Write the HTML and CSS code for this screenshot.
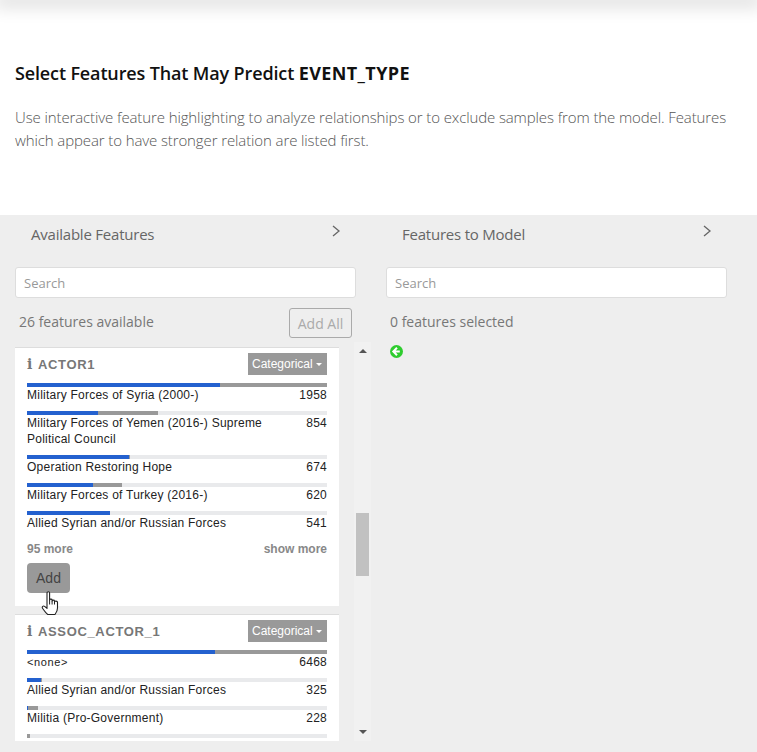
FILE: index.html
```html
<!DOCTYPE html>
<html lang="en">
<head>
    <meta charset="UTF-8">
    <meta name="viewport" content="width=device-width, initial-scale=1.0">
    <title>Select Features</title>
    <link rel="stylesheet" href="styles.css">
</head>
<body>

<div class="topbar"></div>

<div class="intro">
    <h2>Select Features That May Predict <b>EVENT_TYPE</b></h2>
    <p>Use interactive feature highlighting to analyze relationships or to exclude samples from the model. Features which appear to have stronger relation are listed first.</p>
</div>

<div class="panels">
    <div class="panel">
        <div class="panel-head">
            <span class="panel-title">Available Features</span>
            <svg class="chevron" width="9" height="12" viewBox="0 0 9 12"><path d="M1 1l6 5-6 5" fill="none" stroke="#666" stroke-width="1.3"/></svg>
        </div>
        <input class="search" type="text" placeholder="Search">
        <div class="count-row">
            <span class="count">26 features available</span>
            <button class="add-all">Add All</button>
        </div>
        <div class="list-wrap">
            <div class="cards">
                <div class="card">
                    <div class="card-head">
                        <span class="info">i</span>
                        <span class="feature-name">ACTOR1</span>
                        <span class="badge">Categorical<span class="caret"></span></span>
                    </div>
                    <div class="row">
                        <div class="bar"><span class="blue" style="width:193px"></span><span class="grey" style="width:107px"></span></div>
                        <div class="row-text"><span>Military Forces of Syria (2000-)</span><span class="num">1958</span></div>
                    </div>
                    <div class="row">
                        <div class="bar"><span class="blue" style="width:71px"></span><span class="grey" style="width:60px"></span></div>
                        <div class="row-text"><span>Military Forces of Yemen (2016-) Supreme Political Council</span><span class="num">854</span></div>
                    </div>
                    <div class="row">
                        <div class="bar"><span class="blue" style="width:102px"></span><span class="grey" style="width:1px"></span></div>
                        <div class="row-text"><span>Operation Restoring Hope</span><span class="num">674</span></div>
                    </div>
                    <div class="row">
                        <div class="bar"><span class="blue" style="width:66px"></span><span class="grey" style="width:29px"></span></div>
                        <div class="row-text"><span>Military Forces of Turkey (2016-)</span><span class="num">620</span></div>
                    </div>
                    <div class="row">
                        <div class="bar"><span class="blue" style="width:83px"></span></div>
                        <div class="row-text"><span>Allied Syrian and/or Russian Forces</span><span class="num">541</span></div>
                    </div>
                    <div class="more-row"><span>95 more</span><span>show more</span></div>
                    <div class="add-wrap">
                        <button class="add">Add</button>
                        <svg class="hand" width="19" height="25" viewBox="0 0 19 25"><path d="M6 2c0-1.600 2.600-1.600 2.600 0v7c0-1.200 2.500-1.200 2.500 0v1c0-1.200 2.400-1.200 2.400 0v1c0-1.200 3-1.200 3 .3v5.700c0 3-1.300 5-2.500 6.500H6.800c-1.700-1.300-3.500-3.800-5.300-6.300-.9-1.300 .8-2.900 2.100-1.800l2.400 2z" fill="#fff" stroke="#222" stroke-width="1.100" stroke-linejoin="round"/><path d="M8.600 9v4.500M11.100 10v3.500M13.500 11v2.500" stroke="#222" stroke-width="1" fill="none"/></svg>
                    </div>
                </div>
                <div class="card">
                    <div class="card-head">
                        <span class="info">i</span>
                        <span class="feature-name">ASSOC_ACTOR_1</span>
                        <span class="badge">Categorical<span class="caret"></span></span>
                    </div>
                    <div class="row">
                        <div class="bar"><span class="blue" style="width:188px"></span><span class="grey" style="width:112px"></span></div>
                        <div class="row-text"><span class="tag">&lt;none&gt;</span><span class="num">6468</span></div>
                    </div>
                    <div class="row">
                        <div class="bar"><span class="blue" style="width:14px"></span><span class="grey" style="width:1px"></span></div>
                        <div class="row-text"><span>Allied Syrian and/or Russian Forces</span><span class="num">325</span></div>
                    </div>
                    <div class="row">
                        <div class="bar"><span class="blue" style="width:1px"></span><span class="grey" style="width:10px"></span></div>
                        <div class="row-text"><span>Militia (Pro-Government)</span><span class="num">228</span></div>
                    </div>
                    <div class="row">
                        <div class="bar"><span class="grey" style="width:3px"></span></div>
                    </div>
                </div>
            </div>
            <div class="scrollbar">
                <span class="arrow-up"></span>
                <span class="thumb"></span>
                <span class="arrow-down"></span>
            </div>
        </div>
    </div>

    <div class="panel">
        <div class="panel-head">
            <span class="panel-title">Features to Model</span>
            <svg class="chevron" width="9" height="12" viewBox="0 0 9 12"><path d="M1 1l6 5-6 5" fill="none" stroke="#666" stroke-width="1.3"/></svg>
        </div>
        <input class="search" type="text" placeholder="Search">
        <div class="count-row">
            <span class="count">0 features selected</span>
        </div>
        <svg class="back-icon" width="13" height="13" viewBox="0 0 13 13"><circle cx="6.500" cy="6.500" r="6.500" fill="#2ecc2e"/><path d="M7 2.800L3.300 6.500 7 10.200M3.600 6.500h6.200" fill="none" stroke="#fff" stroke-width="2"/></svg>
    </div>
</div>

</body>
</html>
```

FILE: styles.css
```css
body {
    margin: 0;
    width: 757px;
    height: 752px;
    overflow: hidden;
    background-color: white;
    font-family: "Open Sans", Arial, sans-serif;
}

.topbar {
    height: 0;
    box-shadow: 0 0 18px 6px rgba(0, 0, 0, 0.16);
}

.intro {
    height: 215px;
    padding: 0 15px;
    box-sizing: border-box;
    overflow: hidden;
}

.intro h2 {
    margin: 61px 0 0;
    font-size: 18px;
    line-height: 24px;
    font-weight: 600;
    letter-spacing: -0.14px;
    color: #111;
}

.intro h2 b {
    font-weight: 700;
    letter-spacing: 0.4px;
}

.intro p {
    margin: 21px 0 0;
    font-size: 15px;
    line-height: 22.5px;
    font-weight: 300;
    letter-spacing: -0.11px;
    color: #555;
}

.panels {
    display: flex;
    gap: 30px;
    height: 537px;
    padding: 0 15px;
    background-color: #eee;
}

.panel {
    width: 341px;
    flex-shrink: 0;
}

.panel-head {
    display: flex;
    justify-content: space-between;
    height: 52px;
    padding: 10px 15px 0 16px;
    box-sizing: border-box;
}

.panel-title {
    font-size: 15px;
    line-height: 18px;
    font-weight: 400;
    letter-spacing: -0.22px;
    color: #666;
}

.search {
    display: block;
    width: 100%;
    height: 31px;
    padding: 0 8px;
    border: 1px solid #ddd;
    border-radius: 3px;
    box-sizing: border-box;
    font-family: inherit;
    font-size: 13px;
    background-color: white;
}

.search::placeholder {
    color: #999;
}

.count-row {
    display: flex;
    justify-content: space-between;
    height: 44px;
    padding: 10px 4px 0;
    box-sizing: border-box;
}

.count {
    font-size: 14px;
    line-height: 28px;
    color: #777;
}

.add-all {
    width: 63px;
    height: 30px;
    padding: 0;
    border: 1px solid #aaa;
    border-radius: 3px;
    background-color: transparent;
    font-family: inherit;
    font-size: 14px;
    color: #aaa;
}

.list-wrap {
    display: flex;
    height: 399px;
}

.cards {
    width: 324px;
    margin-top: 5px;
    overflow: hidden;
    flex-shrink: 0;
}

.card {
    background-color: white;
    border-top: 1px solid #ddd;
    padding: 5px 12px 13px;
    margin-bottom: 8px;
}

.card-head {
    display: flex;
    align-items: center;
    height: 22px;
    margin-bottom: 8px;
}

.info {
    width: 11px;
    font-family: "DejaVu Serif", serif;
    font-size: 14px;
    font-weight: 700;
    color: #777;
}

.feature-name {
    font-family: "Liberation Sans", Arial, sans-serif;
    font-size: 13px;
    font-weight: 700;
    letter-spacing: 0.65px;
    color: #777;
}

.badge {
    margin-left: auto;
    width: 79px;
    height: 22px;
    box-sizing: border-box;
    padding-left: 4px;
    background-color: #999;
    font-family: "Liberation Sans", Arial, sans-serif;
    font-size: 12px;
    line-height: 22px;
    color: white;
}

.caret {
    display: inline-block;
    margin-left: 3px;
    vertical-align: middle;
    border-top: 3px solid white;
    border-left: 3px solid transparent;
    border-right: 3px solid transparent;
}

.row {
    margin-bottom: 8px;
}

.bar {
    display: flex;
    height: 4px;
    background-color: #e9eaec;
}

.blue {
    background-color: #2461cf;
}

.grey {
    background-color: #999;
}

.row-text {
    display: flex;
    justify-content: space-between;
    font-family: "Liberation Sans", Arial, sans-serif;
    font-size: 12px;
    line-height: 16px;
    letter-spacing: 0.24px;
    color: #222;
}

.row-text > span:first-child {
    width: 250px;
}

.tag {
    font-size: 11px;
    letter-spacing: 0.6px;
}

.num {
    text-align: right;
}

.more-row {
    display: flex;
    justify-content: space-between;
    margin-top: 10px;
    font-family: "Liberation Sans", Arial, sans-serif;
    font-size: 12px;
    font-weight: 700;
    line-height: 16px;
    color: #888;
}

.add-wrap {
    position: relative;
    margin-top: 6px;
    height: 30px;
}

.add {
    display: block;
    width: 43px;
    height: 30px;
    padding: 0;
    border: none;
    border-radius: 4px;
    background-color: #999;
    font-family: "Liberation Sans", Arial, sans-serif;
    font-size: 14px;
    color: #444;
}

.hand {
    position: absolute;
    left: 14px;
    top: 28px;
}

.scrollbar {
    display: flex;
    flex-direction: column;
    align-items: center;
    flex-shrink: 0;
    width: 17px;
    margin-left: 15px;
    height: 399px;
    background-color: #f1f1f1;
}

.arrow-up {
    margin-top: 7px;
    border-bottom: 4px solid #555;
    border-left: 4px solid transparent;
    border-right: 4px solid transparent;
}

.thumb {
    width: 13px;
    height: 63px;
    margin-top: 160px;
    background-color: #c1c1c1;
}

.arrow-down {
    margin-top: auto;
    margin-bottom: 7px;
    border-top: 4px solid #555;
    border-left: 4px solid transparent;
    border-right: 4px solid transparent;
}

.back-icon {
    display: block;
    margin: 3px 0 0 4px;
}
```
